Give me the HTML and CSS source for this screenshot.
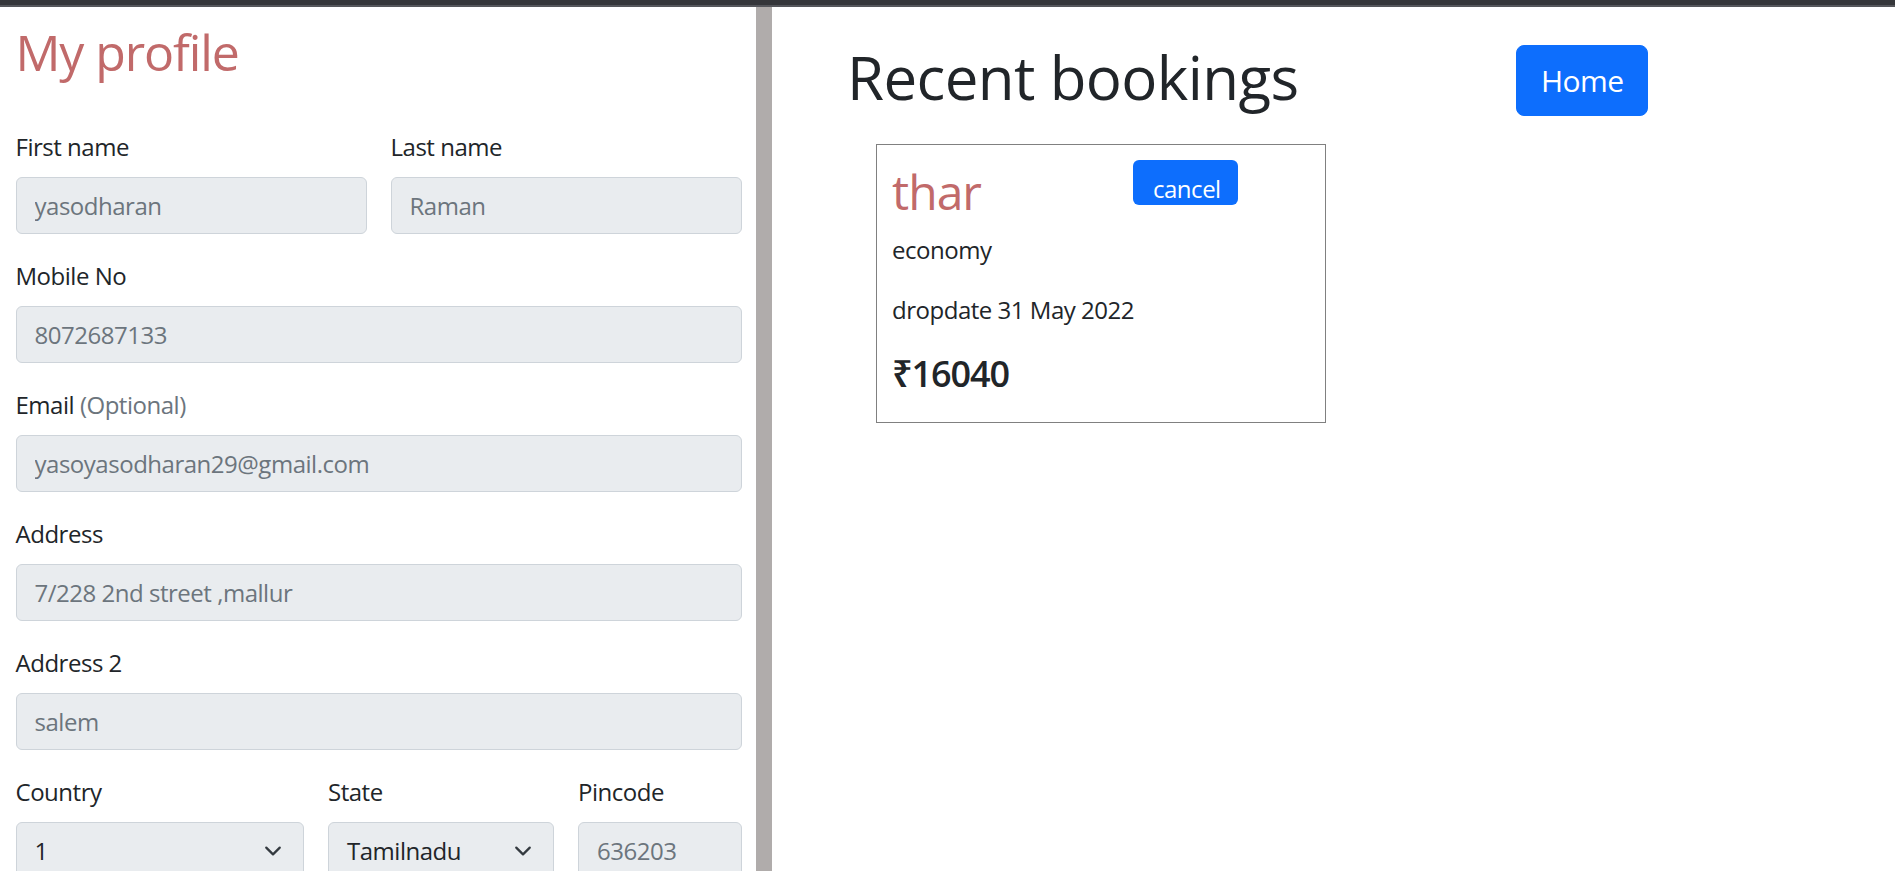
FILE: index.html
```html
<!DOCTYPE html>
<html lang="en">
<head>
<meta charset="utf-8">
<title>My profile</title>
<link rel="stylesheet" href="styles.css">
</head>
<body>
<div class="topbar"></div>
<div class="layout">
  <section class="profile">
    <h1 class="profile-title">My profile</h1>
    <form class="form-grid">
      <div class="field span-6">
        <label class="field-label">First name</label>
        <input class="form-control" type="text" value="yasodharan" readonly>
      </div>
      <div class="field span-6">
        <label class="field-label">Last name</label>
        <input class="form-control" type="text" value="Raman" readonly>
      </div>
      <div class="field span-12">
        <label class="field-label">Mobile No</label>
        <input class="form-control" type="text" value="8072687133" readonly>
      </div>
      <div class="field span-12">
        <label class="field-label">Email <span class="muted">(Optional)</span></label>
        <input class="form-control" type="text" value="yasoyasodharan29@gmail.com" readonly>
      </div>
      <div class="field span-12">
        <label class="field-label">Address</label>
        <input class="form-control" type="text" value="7/228 2nd street ,mallur" readonly>
      </div>
      <div class="field span-12">
        <label class="field-label">Address 2</label>
        <input class="form-control" type="text" value="salem" readonly>
      </div>
      <div class="field span-5">
        <label class="field-label">Country</label>
        <div class="form-select"><span>1</span><svg class="chev" width="24" height="18" viewBox="0 0 16 16"><path d="m2 5 6 6 6-6" fill="none" stroke="#343a40" stroke-width="2" stroke-linecap="round" stroke-linejoin="round"/></svg></div>
      </div>
      <div class="field span-4">
        <label class="field-label">State</label>
        <div class="form-select"><span>Tamilnadu</span><svg class="chev" width="24" height="18" viewBox="0 0 16 16"><path d="m2 5 6 6 6-6" fill="none" stroke="#343a40" stroke-width="2" stroke-linecap="round" stroke-linejoin="round"/></svg></div>
      </div>
      <div class="field span-3">
        <label class="field-label">Pincode</label>
        <input class="form-control" type="text" value="636203" readonly>
      </div>
    </form>
  </section>
  <div class="divider"></div>
  <section class="bookings">
    <header class="bookings-head">
      <h1 class="bookings-title">Recent bookings</h1>
      <a class="btn btn-lg">Home</a>
    </header>
    <div class="booking-card">
      <div class="booking-top">
        <h2 class="booking-name">thar</h2>
        <a class="btn btn-cancel">cancel</a>
      </div>
      <p class="booking-line">economy</p>
      <p class="booking-line">dropdate 31 May 2022</p>
      <h4 class="booking-price">₹16040</h4>
    </div>
  </section>
</div>
</body>
</html>
```

FILE: styles.css
```css
* { box-sizing: border-box; }

html, body {
  margin: 0;
  padding: 0;
  height: 100%;
  overflow: hidden;
  background: #fff;
}

body {
  font-family: "Open Sans", "Noto Sans", sans-serif;
  font-size: 24px;
  line-height: 36px;
  letter-spacing: -0.02em;
  color: #212529;
}

.topbar {
  height: 7px;
  background: #35363a;
  border-bottom: 2px solid #55565b;
}

.layout {
  display: flex;
  height: calc(100vh - 7px);
}

.profile {
  width: 756px;
  flex: none;
  padding: 15px 15px 0 15.5px;
}

.profile-title {
  margin: 0 0 47px;
  font-size: 50px;
  line-height: 60px;
  font-weight: 400;
  letter-spacing: -0.022em;
  color: #c16a6a;
}

.form-grid {
  display: grid;
  grid-template-columns: repeat(12, 1fr);
  column-gap: 24px;
  row-gap: 24px;
  width: 726px;
}

.span-12 { grid-column: span 12; }
.span-6 { grid-column: span 6; }
.span-5 { grid-column: span 5; }
.span-4 { grid-column: span 4; }
.span-3 { grid-column: span 3; }

.field-label {
  display: block;
  margin-bottom: 12px;
  line-height: 36px;
}

.muted { color: #6c757d; }

.form-control,
.form-select {
  display: block;
  width: 100%;
  height: 57px;
  padding: 0 18px;
  font: inherit;
  letter-spacing: -0.02em;
  line-height: 36px;
  background: #e9ecef;
  border: 1px solid #ced4da;
  border-radius: 6px;
  outline: none;
}

.form-control { color: #6c757d; }

.form-select {
  display: flex;
  align-items: center;
  justify-content: space-between;
  color: #212529;
}

.chev { flex: none; display: block; }

.divider {
  width: 16px;
  flex: none;
  background: #b0acab;
}

.bookings {
  flex: 1;
  padding: 31px 0 0 75px;
}

.bookings-head {
  display: grid;
  grid-template-columns: 669px auto;
  align-items: start;
}

.bookings-title {
  margin: 3px 0 0;
  font-size: 60px;
  line-height: 72px;
  font-weight: 400;
  letter-spacing: -0.01em;
  color: #212529;
}

.btn {
  display: inline-block;
  color: #fff;
  background: #0d6efd;
  text-decoration: none;
}

.btn-lg {
  justify-self: start;
  margin-top: 7px;
  padding: 12px 24px;
  font-size: 30px;
  line-height: 45px;
  letter-spacing: -0.02em;
  border: 1px solid #0d6efd;
  border-radius: 8px;
}

.booking-card {
  margin: 28px 0 0 29px;
  width: 450px;
  border: 1px solid #808080;
  padding: 17px 15px 15px;
}

.booking-top {
  display: flex;
  align-items: flex-start;
  margin-bottom: 12px;
}

.booking-name {
  width: 241px;
  margin: 0;
  padding-top: 2px;
  font-size: 48px;
  line-height: 55.6px;
  font-weight: 400;
  letter-spacing: -0.02em;
  color: #c16a6a;
}

.btn-cancel {
  width: 105px;
  height: 45px;
  margin-top: -2px;
  padding: 11px 0 0 20px;
  font-size: 24px;
  line-height: 36px;
  letter-spacing: -0.02em;
  border-radius: 6px;
  overflow: visible;
}

.booking-line {
  margin: 0 0 24px;
}

.booking-price {
  margin: 0 0 12px;
  font-size: 36px;
  line-height: 43.2px;
  font-weight: 600;
  letter-spacing: -0.03em;
}
```
